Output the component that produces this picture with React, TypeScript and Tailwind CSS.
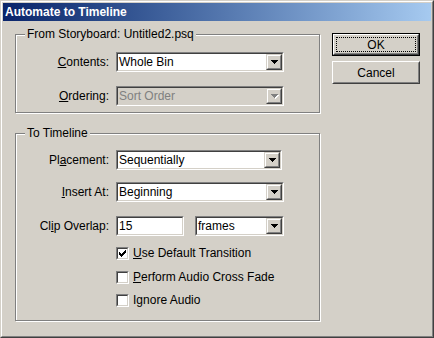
import React from "react";

const Arrow = ({ disabled }: { disabled?: boolean }) => (
  <svg width="8" height="5" viewBox="0 0 8 5" shapeRendering="crispEdges">
    {disabled && (
      <g fill="#ffffff">
        <rect x="1" y="1" width="7" height="1" />
        <rect x="2" y="2" width="5" height="1" />
        <rect x="3" y="3" width="3" height="1" />
        <rect x="4" y="4" width="1" height="1" />
      </g>
    )}
    <g fill={disabled ? "#808080" : "#000000"}>
      <rect x="0" y="0" width="7" height="1" />
      <rect x="1" y="1" width="5" height="1" />
      <rect x="2" y="2" width="3" height="1" />
      <rect x="3" y="3" width="1" height="1" />
    </g>
  </svg>
);

const Check = () => (
  <svg width="7" height="7" viewBox="0 0 7 7" shapeRendering="crispEdges" fill="#000">
    <rect x="6" y="0" width="1" height="1" />
    <rect x="5" y="1" width="2" height="1" />
    <rect x="0" y="2" width="1" height="1" />
    <rect x="4" y="2" width="3" height="1" />
    <rect x="0" y="3" width="2" height="1" />
    <rect x="3" y="3" width="3" height="1" />
    <rect x="0" y="4" width="5" height="1" />
    <rect x="1" y="5" width="3" height="1" />
    <rect x="2" y="6" width="1" height="1" />
  </svg>
);

function Combo({
  value,
  widthClass,
  disabled,
}: {
  value: string;
  widthClass: string;
  disabled?: boolean;
}) {
  return (
    <div
      className={`flex h-[20px] ${widthClass} border border-t-[#808080] border-l-[#808080] border-b-white border-r-white`}
    >
      <div
        className={`flex flex-1 min-w-0 border border-t-[#404040] border-l-[#404040] border-b-[#d4d0c8] border-r-[#d4d0c8] ${
          disabled ? "bg-[#d4d0c8]" : "bg-white"
        }`}
      >
        <span
          className={`flex-1 pl-[1px] leading-[16px] whitespace-nowrap overflow-hidden ${
            disabled ? "text-[#808080]" : "text-black"
          }`}
        >
          {value}
        </span>
        <div className="h-[16px] w-[16px] border border-t-[#d4d0c8] border-l-[#d4d0c8] border-b-[#404040] border-r-[#404040]">
          <div className="flex h-full w-full items-center justify-center border border-t-white border-l-white border-b-[#808080] border-r-[#808080] bg-[#d4d0c8] pl-[1px]">
            <Arrow disabled={disabled} />
          </div>
        </div>
      </div>
    </div>
  );
}

function Label({ children }: { children: React.ReactNode }) {
  return (
    <div className="w-[94px] pr-[1px] text-right whitespace-nowrap">{children}</div>
  );
}

function CheckRow({
  checked,
  children,
  className,
}: {
  checked?: boolean;
  children: React.ReactNode;
  className: string;
}) {
  return (
    <div className={`flex items-center ${className}`}>
      <div className="ml-[100px] h-[13px] w-[13px] border border-t-[#808080] border-l-[#808080] border-b-white border-r-white">
        <div className="flex h-full w-full items-center justify-center border border-t-[#404040] border-l-[#404040] border-b-[#d4d0c8] border-r-[#d4d0c8] bg-white">
          {checked && <Check />}
        </div>
      </div>
      <span className="ml-[4px] whitespace-nowrap leading-[13px]">{children}</span>
    </div>
  );
}

function Group({
  title,
  className,
  children,
}: {
  title: string;
  className: string;
  children: React.ReactNode;
}) {
  return (
    <div
      className={`relative w-[305px] border border-[#808080] shadow-[inset_1px_1px_0_#ffffff,1px_1px_0_#ffffff] ${className}`}
    >
      <div className="absolute left-[9px] top-[-8px] bg-[#d4d0c8] px-[2px] leading-[14px] whitespace-nowrap">
        {title}
      </div>
      {children}
    </div>
  );
}

export default function App() {
  return (
    <div className="h-[338px] w-[434px] border border-t-[#d4d0c8] border-l-[#d4d0c8] border-b-[#404040] border-r-[#404040] bg-[#d4d0c8] font-['Liberation_Sans',Arial,sans-serif] text-[12px] text-black">
      <div className="h-full w-full border border-t-white border-l-white border-b-[#808080] border-r-[#808080] p-[1px]">
        <div className="flex h-[18px] items-center bg-gradient-to-r from-[#0a246a] to-[#a6caf0] pl-[2px] text-[12px] font-bold text-white">
          Automate to Timeline
        </div>
        <div className="flex pl-[12px] pt-[12px]">
          <div className="mt-[1px] flex flex-col">
            <Group title="From Storyboard: Untitled2.psq" className="h-[79px] pt-[17px]">
              <div className="flex items-center">
                <Label>
                  <span className="underline">C</span>ontents:
                </Label>
                <div className="ml-[6px]">
                  <Combo value="Whole Bin" widthClass="w-[168px]" />
                </div>
              </div>
              <div className="mt-[14px] flex items-center">
                <Label>
                  <span className="underline">O</span>rdering:
                </Label>
                <div className="ml-[6px]">
                  <Combo value="Sort Order" widthClass="w-[168px]" disabled />
                </div>
              </div>
            </Group>
            <Group title="To Timeline" className="mt-[20px] h-[188px] pt-[16px]">
              <div className="flex items-center">
                <Label>
                  Pl<span className="underline">a</span>cement:
                </Label>
                <div className="ml-[6px]">
                  <Combo value="Sequentially" widthClass="w-[166px]" />
                </div>
              </div>
              <div className="mt-[12px] flex items-center">
                <Label>
                  <span className="underline">I</span>nsert At:
                </Label>
                <div className="ml-[6px]">
                  <Combo value="Beginning" widthClass="w-[168px]" />
                </div>
              </div>
              <div className="mt-[14px] flex items-center">
                <Label>
                  Cl<span className="underline">i</span>p Overlap:
                </Label>
                <div className="ml-[6px] flex h-[20px] w-[68px] border border-t-[#808080] border-l-[#808080] border-b-white border-r-white">
                  <div className="flex-1 border border-t-[#404040] border-l-[#404040] border-b-[#d4d0c8] border-r-[#d4d0c8] bg-white pl-[1px] leading-[16px]">
                    15
                  </div>
                </div>
                <div className="ml-[11px]">
                  <Combo value="frames" widthClass="w-[89px]" />
                </div>
              </div>
              <CheckRow checked className="mt-[11px]">
                <span className="underline">U</span>se Default Transition
              </CheckRow>
              <CheckRow className="mt-[11px]">
                <span className="underline">P</span>erform Audio Cross Fade
              </CheckRow>
              <CheckRow className="mt-[10px]">
                I<span className="underline">g</span>nore Audio
              </CheckRow>
            </Group>
          </div>
          <div className="ml-[12px] flex flex-col">
            <div className="h-[23px] w-[88px] border border-black">
              <div className="h-full w-full border border-t-white border-l-white border-b-[#404040] border-r-[#404040]">
                <div className="h-full w-full border border-t-[#d4d0c8] border-l-[#d4d0c8] border-b-[#808080] border-r-[#808080] p-[1px]">
                  <div className="flex h-full w-full items-center justify-center border border-dotted border-black leading-none">
                    OK
                  </div>
                </div>
              </div>
            </div>
            <div className="mt-[5px] h-[23px] w-[88px] border border-t-white border-l-white border-b-[#404040] border-r-[#404040]">
              <div className="flex h-full w-full items-center justify-center border border-t-[#d4d0c8] border-l-[#d4d0c8] border-b-[#808080] border-r-[#808080]">
                Cancel
              </div>
            </div>
          </div>
        </div>
      </div>
    </div>
  );
}
